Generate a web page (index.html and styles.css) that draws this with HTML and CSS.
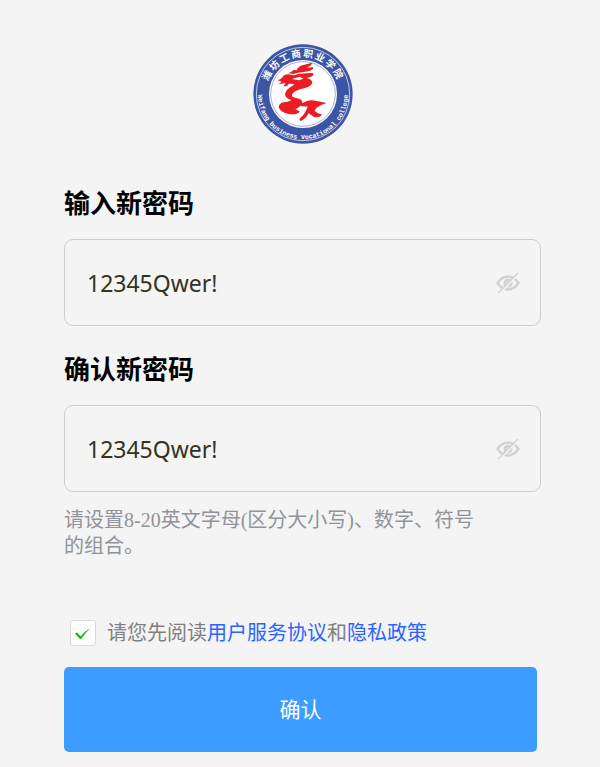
FILE: index.html
```html
<!DOCTYPE html>
<html lang="zh-CN">
<head>
<meta charset="utf-8">
<meta name="viewport" content="width=device-width, initial-scale=1">
<title>输入新密码</title>
<link rel="stylesheet" href="styles.css">
</head>
<body>
<svg class="symbols" aria-hidden="true">
  <symbol id="eye-off" viewBox="0 0 24 24">
    <path d="M1.500 12Q6 5.500 12 5.500T22.500 12Q18 18.500 12 18.500T1.500 12Z" fill="none" stroke="currentColor" stroke-width="2.500"/>
    <circle cx="12" cy="12" r="3" fill="none" stroke="currentColor" stroke-width="3"/>
    <path d="M3.500 22.500L22.500 3.500" stroke="#f4f4f4" stroke-width="1.500"/>
    <path d="M2 22L22 2" stroke="currentColor" stroke-width="1.500"/>
  </symbol>
</svg>
<main class="page">
  <svg class="logo" viewBox="17 16 300 300" role="img" aria-label="潍坊工商职业学院">
    <defs>
      <path id="arc-top" d="M56 166A111 111 0 0 1 278 166"/>
      <path id="arc-bottom" d="M36 134A135 135 0 1 0 298 134"/>
    </defs>
    <circle cx="167" cy="166" r="149" fill="#3c55a5"/>
    <circle cx="167" cy="166" r="140" fill="none" stroke="#c3cce6" stroke-width="3"/>
    <circle cx="167" cy="166" r="102" fill="#fff"/>
    <circle cx="167" cy="166" r="97" fill="none" stroke="#7485bd" stroke-width="2"/>
    <text class="logo-name"><textPath href="#arc-top" startOffset="50%" text-anchor="middle">潍坊工商职业学院</textPath></text>
    <text class="logo-latin"><textPath href="#arc-bottom" startOffset="50%" text-anchor="middle">Weifang business vocational college</textPath></text>
    <g fill="#ec1c24">
      <path d="M90 124Q98 124 104 117Q111 107 122 107L142 110Q150 106 157 105L177 104L196 103Q203 108 191 114L178 118Q194 122 195 132Q192 142 176 147Q156 151 144 158Q132 166 134 173Q138 177 150 179Q166 183 165 192Q160 205 144 211L158 219Q148 229 124 226Q100 222 94 206Q94 195 108 191Q126 189 132 184Q114 179 113 166Q116 153 130 145L142 136L124 135Q120 145 109 142L115 133L94 137L103 129Z"/>
      <path d="M122 104Q133 101 138 94L148 95Q152 84 165 80Q180 76 195 72Q192 82 177 87L197 86Q201 92 188 96L170 100L148 103L138 106Z"/>
      <path d="M140 190Q158 198 174 189Q190 182 208 187L238 193Q219 198 208 207Q203 213 202 217Q211 226 225 228Q213 239 199 234Q189 228 184 223Q176 240 161 247Q154 245 158 239Q174 227 181 203Q160 207 140 190Z"/>
    </g>
    <path d="M134 121L158 114L168 120L155 125Z" fill="#fff"/>
  </svg>

  <form class="form">
    <label class="title" for="new-password">输入新密码</label>
    <div class="field">
      <input id="new-password" type="text" value="12345Qwer!" autocomplete="off">
      <button class="eye" type="button" aria-label="隐藏密码"><svg><use href="#eye-off"/></svg></button>
    </div>

    <label class="title" for="confirm-password">确认新密码</label>
    <div class="field">
      <input id="confirm-password" type="text" value="12345Qwer!" autocomplete="off" aria-describedby="hint">
      <button class="eye" type="button" aria-label="隐藏密码"><svg><use href="#eye-off"/></svg></button>
    </div>
    <p class="hint" id="hint">请设置8-20英文字母(区分大小写)、数字、符号的组合。</p>

    <div class="agreement">
      <span class="check">
        <input id="agree" type="checkbox" checked>
        <svg viewBox="0 0 26 26" aria-hidden="true"><path d="M5 13.500L7 12.500L10.500 16.500Q15 11 20.500 8Q15 13 11 19H10Z"/></svg>
      </span>
      <label for="agree">请您先阅读<a href="#terms">用户服务协议</a>和<a href="#privacy">隐私政策</a></label>
    </div>

    <button class="submit" type="submit">确认</button>
  </form>
</main>
</body>
</html>
```

FILE: styles.css
```css
* {
  box-sizing: border-box;
}

body {
  margin: 0;
  background: #f4f4f4;
  font-family: "Liberation Serif", "Noto Sans CJK SC", serif;
}

.symbols {
  display: none;
}

.page {
  display: flex;
  flex-direction: column;
  padding: 44px 59px 15px 64px;
}

.logo {
  width: 100px;
  height: 100px;
  align-self: center;
}

.logo-name {
  fill: #fff;
  font: bold 29px "Noto Sans CJK SC", sans-serif;
  letter-spacing: 5px;
}

.logo-latin {
  fill: #fff;
  font: bold 20px "Liberation Mono", monospace;
}

.form {
  display: flex;
  flex-direction: column;
  margin-top: 40px;
}

.title {
  margin-bottom: 19px;
  color: #000;
  font: bold 26px/36px "Noto Sans CJK SC", sans-serif;
}

.field {
  display: flex;
  align-items: center;
  height: 87px;
  padding: 0 20px 0 22px;
  border: 1px solid #ccc;
  border-radius: 9px;
}

.field + .title {
  margin-top: 24px;
}

.field input {
  flex: 1;
  min-width: 0;
  padding: 0;
  border: 0;
  outline: 0;
  background: transparent;
  color: #332;
  font: 23px/32px "Noto Sans", sans-serif;
}

.eye {
  display: flex;
  padding: 0;
  border: 0;
  background: none;
  color: #d2d2d2;
  cursor: pointer;
}

.eye svg {
  width: 24px;
  height: 24px;
}

.hint {
  max-width: 416px;
  margin: 15px 0 0;
  color: #909399;
  font-size: 20px;
  line-height: 26px;
}

.agreement {
  display: flex;
  align-items: center;
  gap: 11px;
  margin: 61px 0 21px 6px;
  color: #808080;
  font-size: 20px;
  line-height: 26px;
}

.agreement a {
  color: #2b65ff;
  text-decoration: none;
}

.check {
  display: grid;
}

.check input,
.check svg {
  grid-area: 1 / 1;
  width: 26px;
  height: 26px;
  margin: 0;
}

.check input {
  appearance: none;
  border: 1px solid #dcdcdc;
  border-radius: 3px;
  background: #fff;
}

.check svg {
  fill: #09bb07;
  pointer-events: none;
  visibility: hidden;
}

.check input:checked + svg {
  visibility: visible;
}

.submit {
  height: 85px;
  margin-right: 4px;
  padding: 0 0 4px;
  border: 0;
  border-radius: 5px;
  background: #3c9cff;
  color: #fff;
  font: 21px/30px "Noto Sans CJK SC", sans-serif;
  cursor: pointer;
}
```
